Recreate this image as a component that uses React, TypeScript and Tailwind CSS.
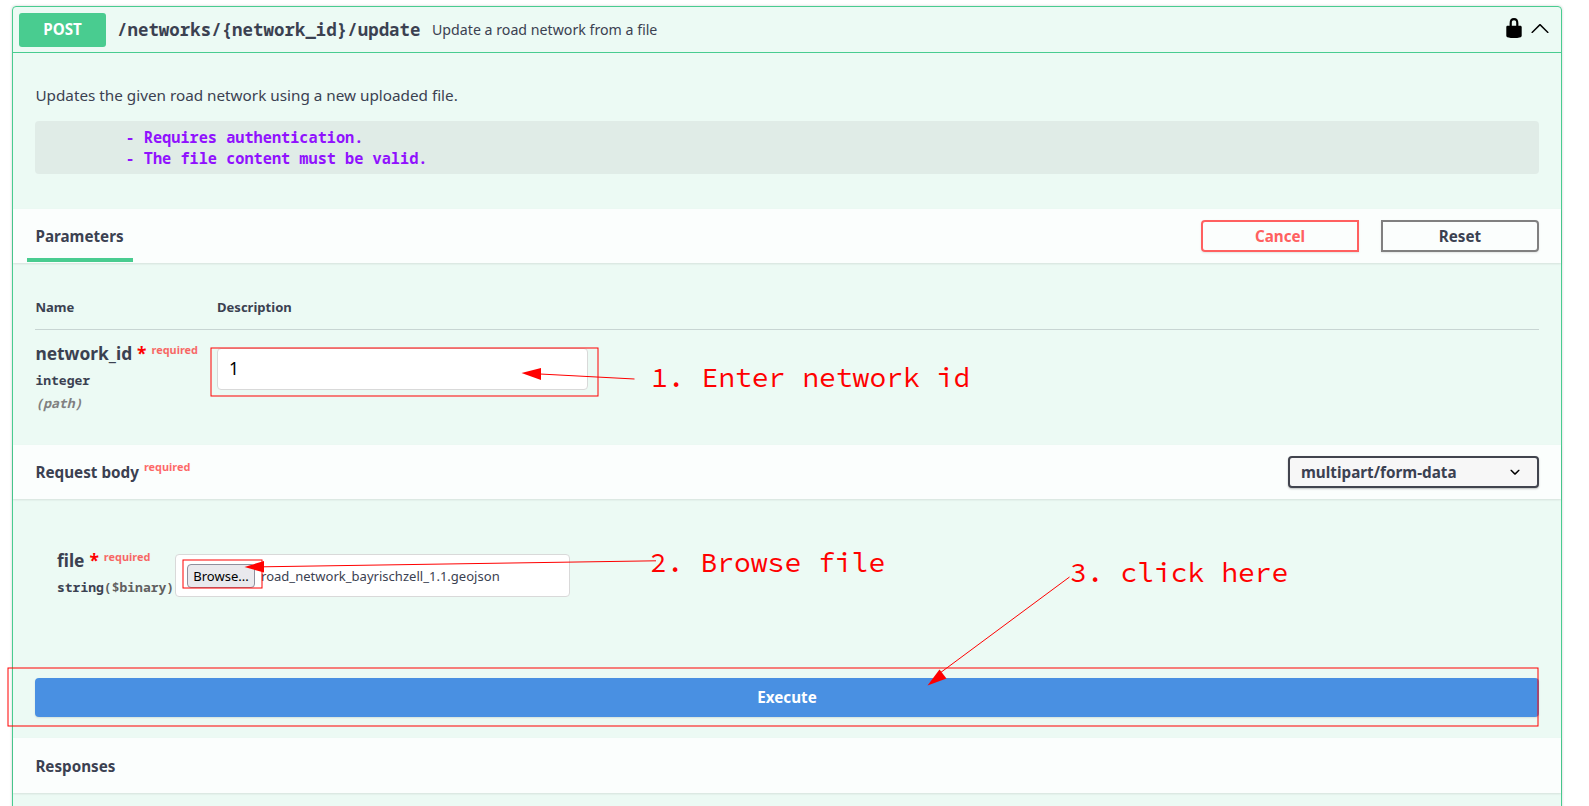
import React from "react";

const mono = "font-['Noto_Sans_Mono','DejaVu_Sans_Mono',monospace] font-bold";
const note =
  "absolute whitespace-pre font-['Source_Code_Pro','Noto_Sans_Mono_CJK_SC','Noto_Sans_CJK_SC',monospace] text-[28px] leading-[40px] font-[370] text-[#ff0000]";

function SectionHeader({ children }: { children: React.ReactNode }) {
  return (
    <div className="flex h-[54px] shrink-0 items-center justify-between bg-white/80 px-[22px] shadow-[0_1px_2px_rgba(0,0,0,0.1)]">
      {children}
    </div>
  );
}

function Required() {
  return <span className="block text-[10.9px] leading-[11px] font-bold text-[#ff0000]/60">required</span>;
}

function LockIcon() {
  return (
    <svg className="mb-[3px] size-[22px]" viewBox="0 0 20 20" fill="#000">
      <path d="M15.8 8H14V5.6C14 2.703 12.665 1 10 1 7.334 1 6 2.703 6 5.6V8H4c-.553 0-1 .646-1 1.199V17c0 .549.428 1.139.951 1.307l1.197.387C5.672 18.861 6.55 19 7.1 19h5.8c.549 0 1.428-.139 1.951-.307l1.196-.387c.524-.167.953-.757.953-1.306V9.199C17 8.646 16.352 8 15.8 8zM12 8H8V5.199C8 3.754 8.797 3 10 3c1.203 0 2 .754 2 2.199V8z" />
    </svg>
  );
}

function Annotations() {
  return (
    <div className="pointer-events-none absolute inset-0">
      <svg className="absolute inset-0" width="1589" height="806" viewBox="0 0 1589 806" fill="none">
        <g stroke="#ff0000" strokeWidth="1">
          <rect x="211" y="348" width="387" height="48" />
          <rect x="183" y="560" width="79" height="28" />
          <rect x="8" y="668" width="1530" height="58" />
        </g>
        <g stroke="#ff0000" strokeWidth="1">
          <path d="M540 374 634.5 379" />
          <path d="M263 566.8 656 560.8" />
          <path d="M940 673 1069.5 577" />
        </g>
        <g fill="#ff0000">
          <path d="M521.5 373 541 368v12z" />
          <path d="M244.5 567 264 561v11.5z" />
          <path d="M927.5 685.5 939.5 669.5 946.5 678.5z" />
        </g>
      </svg>
      <span className={`${note} left-[651px] top-[357px]`}>1. Enter network id</span>
      <span className={`${note} left-[650px] top-[542px]`}>2. Browse file</span>
      <span className={`${note} left-[1070px] top-[552px]`}>3. click here</span>
    </div>
  );
}

export default function App() {
  return (
    <div className="relative h-[806px] w-[1589px] overflow-hidden bg-white pt-[6px] pl-3 font-['Noto_Sans',sans-serif] text-[#3b4151]">
      <div className="flex h-[830px] w-[1550px] flex-col rounded-[4px] border border-[#49cc90] bg-[#49cc90]/10 shadow-[0_0_3px_rgba(0,0,0,0.19)]">
        <div className="flex h-[46px] shrink-0 items-center border-b border-[#49cc90] pr-[11px] pl-[6px]">
          <div className="flex h-[34px] w-[87px] items-center justify-center rounded-[3px] bg-[#49cc90] text-[15.2px] leading-[21px] font-bold text-white">
            POST
          </div>
          <span className={`${mono} ml-[11px] w-[303px] text-[17.36px] tracking-[0.05px] whitespace-nowrap`}>
            /networks/&#123;network_id&#125;/update
          </span>
          <span className="ml-[12px] flex-1 text-[14.2px]">Update a road network from a file</span>
          <LockIcon />
          <svg className="mb-[3px] ml-[5px] size-5" viewBox="0 0 20 20">
            <path d="M17.418 14.908c.272.281.714.281.987 0s.272-.735 0-.986L10.494 6.109c-.273-.252-.715-.252-.988 0L1.595 13.922c-.272.251-.272.705 0 .986s.714.281.987 0L10 7.767z" />
          </svg>
        </div>

        <div className="flex h-[156px] shrink-0 flex-col px-[22px] pt-[32px]">
          <p className="h-[36px] pl-[0.4px] text-[15.28px] leading-[21px]">
            Updates the given road network using a new uploaded file.
          </p>
          <pre className={`${mono} h-[53px] rounded-[4px] bg-[#e0ece7] pt-[6px] pl-[90.5px] text-[15.25px] leading-[21px] text-[#9012fe]`}>
            {"- Requires authentication.\n- The file content must be valid."}
          </pre>
        </div>

        <SectionHeader>
          <div className="-ml-2 flex h-[54px] w-[106px] flex-col justify-between pb-[1px]">
            <span className="pt-[15px] pl-[8.5px] text-[15.2px] leading-6 font-bold">Parameters</span>
            <div className="h-1 bg-[#49cc90]" />
          </div>
          <div className="flex gap-[22px] text-[15.2px] font-bold">
            <button className="h-8 w-[158px] rounded-l-[4px] border-2 border-[#ff6060] pt-[1px] leading-none text-[#ff6060] shadow-[0_1px_2px_rgba(0,0,0,0.1)]">
              Cancel
            </button>
            <button className="h-8 w-[158px] rounded-r-[4px] border-2 border-[#808080] pt-[1px] leading-none shadow-[0_1px_2px_rgba(0,0,0,0.1)]">
              Reset
            </button>
          </div>
        </SectionHeader>

        <div className="flex h-[182px] shrink-0 flex-col px-[22px]">
          <div className="flex h-[67px] shrink-0 items-end border-b border-[#3b4151]/20 pb-[12px] text-[13.05px] leading-5 font-bold">
            <span className="w-[182px] pl-[0.4px]">Name</span>
            <span>Description</span>
          </div>
          <div className="flex pt-[8px]">
            <div className="w-[182px] pl-[0.4px]">
              <div className="flex h-[30px] items-start whitespace-nowrap">
                <span className="text-[17.36px] leading-[30px] font-bold">network_id</span>
                <span className="ml-[5px] text-[17.36px] leading-[30px] font-bold text-[#ff0000]">*</span>
                <span className="ml-[5px] pt-[6px]"><Required /></span>
              </div>
              <div className={`${mono} pt-[2px] text-[13.02px] leading-[20px]`}>integer</div>
              <div className={`${mono} pt-[3px] text-[13.02px] leading-[20px] text-[#808080] italic`}>(path)</div>
            </div>
            <input
              readOnly
              value="1"
              className="mt-[10px] h-[42px] w-[371px] rounded-[4px] border border-[#d9d9d9] bg-white px-[11px] pb-[3px] text-[17.36px] text-black"
            />
          </div>
        </div>

        <SectionHeader>
          <div className="flex items-start">
            <span className="pl-[0.4px] text-[15.25px] leading-6 font-bold">Request body</span>
            <span className="ml-[5px] pt-[1px]"><Required /></span>
          </div>
          <div className="flex h-8 w-[251px] items-center justify-between rounded-[4px] border-2 border-[#41444e] bg-[#f7f7f7] pr-[12px] pl-[11px] text-[15.25px] font-bold shadow-[0_1px_2px_rgba(0,0,0,0.25)]">
            multipart/form-data
            <svg className="size-5" viewBox="0 0 20 20">
              <path d="M13.418 7.859c.271-.268.709-.268.978 0 .27.268.272.701 0 .969l-3.908 3.83c-.27.268-.707.268-.979 0l-3.908-3.83c-.27-.267-.27-.701 0-.969.271-.268.709-.268.978 0L10 11z" />
            </svg>
          </div>
        </SectionHeader>

        <div className="flex h-[239px] shrink-0 flex-col px-[22px] pt-[50px]">
          <div className="flex h-[129px] pl-[22px]">
            <div className="w-[118px]">
              <div className="flex h-[30px] items-start whitespace-nowrap">
                <span className="text-[17.36px] leading-[22px] font-bold">file</span>
                <span className="ml-[5px] text-[17.36px] leading-[22px] font-bold text-[#ff0000]">*</span>
                <span className="ml-[5px] pt-[2px]"><Required /></span>
              </div>
              <div className={`${mono} text-[13.02px] leading-[16px] whitespace-nowrap`}>
                string<span className="text-[#606060]">($binary)</span>
              </div>
            </div>
            <div className="mt-[5px] flex h-[43px] w-[395px] items-center rounded-[4px] border border-[#d9d9d9] bg-white px-[11px] text-[13.05px]">
              <button className="h-6 w-[68px] rounded-[4px] border border-[#8f8f9d] bg-[#e9e9ed] pt-[2px] leading-none whitespace-nowrap text-black">
                Browse...
              </button>
              <span className="ml-[6px] pt-[2px]">road_network_bayrischzell_1.1.geojson</span>
            </div>
          </div>
          <button className="h-[39px] rounded-[4px] bg-[#4990e2] text-[15.2px] leading-none font-bold text-white shadow-[0_1px_2px_rgba(0,0,0,0.1)]">
            Execute
          </button>
        </div>

        <div className="flex h-[55px] shrink-0 items-center bg-white/80 px-[22px] pt-[2px] shadow-[0_1px_2px_rgba(0,0,0,0.1)]">
          <span className="pl-[0.4px] text-[15.2px] font-bold">Responses</span>
        </div>
      </div>
      <Annotations />
    </div>
  );
}
